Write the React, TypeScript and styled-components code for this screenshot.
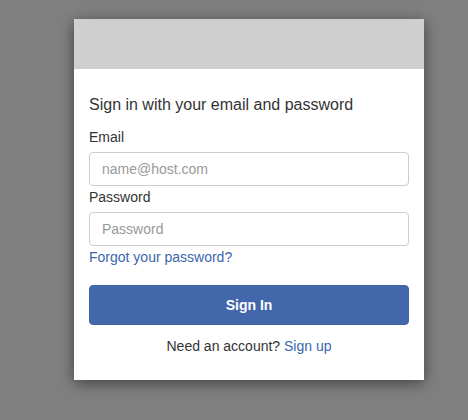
import React, { FC } from 'react';
import styled, { createGlobalStyle } from 'styled-components';

const GlobalStyle = createGlobalStyle`
  html, body {
    margin: 0;
    padding: 0;
    background: #808080;
    font-family: "Liberation Sans", Arial, sans-serif;
  }
`;

const SPage = styled.div`
  min-height: 420px;
  padding: 19px 0 0 74px;
  box-sizing: border-box;
`;

const SModal = styled.div`
  width: 350px;
  background: #ffffff;
  box-shadow: 0 3px 14px rgba(0, 0, 0, 0.5);
`;

const SBanner = styled.div`
  height: 50px;
  background: #cfcfcf;
`;

const SBody = styled.div`
  display: flex;
  flex-direction: column;
  padding: 27px 15px 26px;
`;

const STitle = styled.div`
  font-size: 16px;
  color: #333333;
  margin-bottom: 15px;
`;

const SLabel = styled.label`
  font-size: 14px;
  color: #333333;
  margin-bottom: 7px;
`;

const SInput = styled.input`
  height: 34px;
  box-sizing: border-box;
  border: 1px solid #cccccc;
  border-radius: 4px;
  padding: 6px 12px;
  font-family: inherit;
  font-size: 14px;
  color: #555555;
  margin-bottom: 3px;
  &::placeholder {
    color: #999999;
  }
`;

const SLink = styled.a<{ $size?: number }>`
  color: #3a66ad;
  text-decoration: none;
  font-size: ${({ $size }) => $size ?? 14}px;
`;

const SButton = styled.button`
  margin-top: 20px;
  height: 40px;
  border: 1px solid #3f64a6;
  border-radius: 4px;
  background: #4267aa;
  color: #ffffff;
  font-family: inherit;
  font-size: 14px;
  font-weight: bold;
`;

const SFooter = styled.div`
  margin-top: 13px;
  text-align: center;
  font-size: 14px;
  color: #333333;
`;

const App: FC = () => {
  return (
    <SPage>
      <GlobalStyle />
      <SModal>
        <SBanner />
        <SBody>
          <STitle>Sign in with your email and password</STitle>
          <SLabel>Email</SLabel>
          <SInput placeholder="name@host.com" />
          <SLabel>Password</SLabel>
          <SInput type="password" placeholder="Password" />
          <SLink href="#">Forgot your password?</SLink>
          <SButton>Sign In</SButton>
          <SFooter>
            Need an account? <SLink href="#">Sign up</SLink>
          </SFooter>
        </SBody>
      </SModal>
    </SPage>
  );
};

export default App;
